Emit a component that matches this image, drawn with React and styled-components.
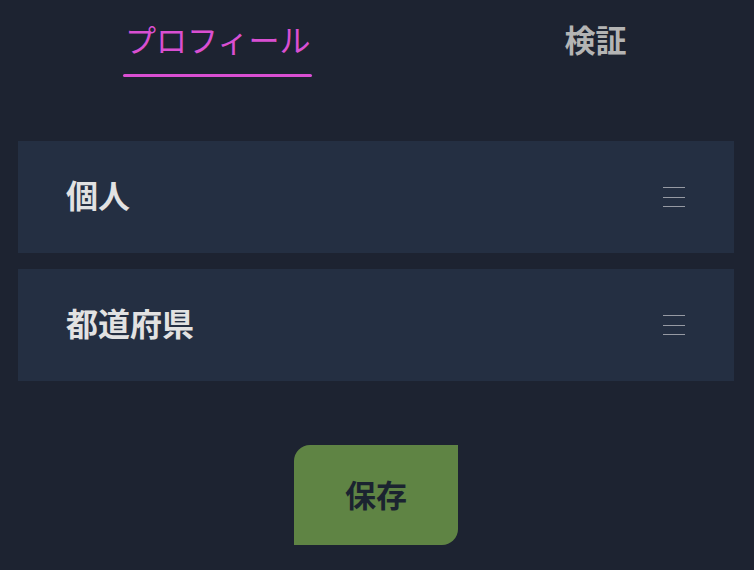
import React, { useState } from "react";
import styled, { createGlobalStyle } from "styled-components";

const GlobalStyle = createGlobalStyle`
  html, body {
    margin: 0;
    padding: 0;
    background: #1d2331;
  }
  body {
    font-family: "Noto Sans CJK JP", "Noto Sans", sans-serif;
  }
`;

const sections = ["個人", "都道府県"];

const App = () => {
  const [active, setActive] = useState(0);
  const tabs = ["プロフィール", "検証"];

  return (
    <Page>
      <GlobalStyle />
      <TabBar>
        {tabs.map((t, i) =>
          <Tab key={t} $active={active === i} onClick={() => setActive(i)}>
            {t}
          </Tab>
        )}
      </TabBar>
      <List>
        {sections.map(s =>
          <Section key={s}>
            <SectionTitle>
              {s}
            </SectionTitle>
            <MenuIcon width="22" height="22" viewBox="0 0 22 22">
              <line x1="0" y1="1.5" x2="22" y2="1.5" />
              <line x1="0" y1="11.5" x2="22" y2="11.5" />
              <line x1="0" y1="20.5" x2="22" y2="20.5" />
            </MenuIcon>
          </Section>
        )}
      </List>
      <Footer>
        <SaveButton>保存</SaveButton>
      </Footer>
    </Page>
  );
};

export default App;

const Page = styled.div`
  min-height: 570px;
  padding: 0 20px 0 18px;
  box-sizing: border-box;
`;

const TabBar = styled.div`
  display: flex;
  gap: 250px;
  padding: 20px 0 0 105px;
`;

const Tab = styled.div`
  position: relative;
  padding: 0 2px 20px;
  font-size: 31px;
  line-height: 37px;
  cursor: pointer;
  color: ${p => (p.$active ? "#d94fd2" : "#b4b4b4")};
  font-weight: ${p => (p.$active ? 400 : 700)};

  &::after {
    content: "";
    display: ${p => (p.$active ? "block" : "none")};
    position: absolute;
    left: 0;
    right: 0;
    bottom: 0;
    height: 3px;
    border-radius: 2px;
    background: #d94fd2;
  }
`;

const List = styled.div`
  display: flex;
  flex-direction: column;
  gap: 16px;
  margin-top: 64px;
`;

const Section = styled.div`
  display: flex;
  align-items: center;
  justify-content: space-between;
  height: 112px;
  padding: 0 49px 0 48px;
  background: #242f42;
`;

const SectionTitle = styled.div`
  padding-bottom: 6px;
  font-size: 32px;
  font-weight: 700;
  color: #e2e2e2;
`;

const MenuIcon = styled.svg`
  stroke: #969aa3;
  stroke-width: 1;
`;

const Footer = styled.div`
  display: flex;
  justify-content: center;
  margin-top: 64px;
`;

const SaveButton = styled.button`
  width: 164px;
  height: 100px;
  padding: 0 0 4px;
  border: none;
  border-radius: 16px 0 16px 0;
  background: #5f8444;
  color: #1b2330;
  font-family: inherit;
  font-size: 31px;
  font-weight: 700;
  cursor: pointer;
`;
